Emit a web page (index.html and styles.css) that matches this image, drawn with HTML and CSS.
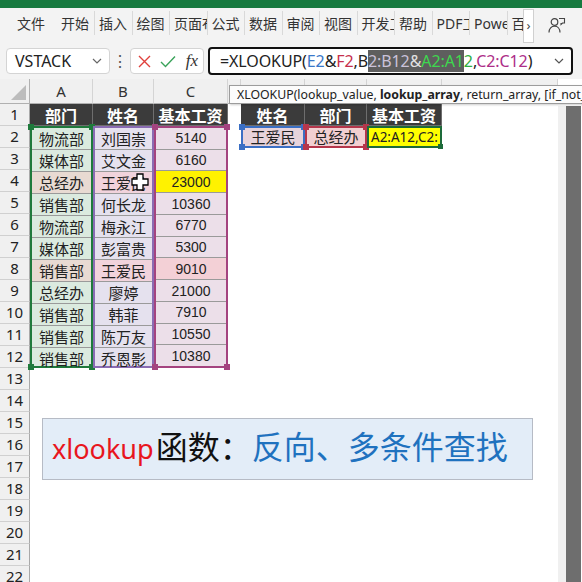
FILE: index.html
```html
<!DOCTYPE html>
<html>
<head>
	<title>XLOOKUP 反向、多条件查找</title>
	<link rel="stylesheet" href="styles.css">
</head>
<body>
	<div class="title-bar"></div>

	<div class="ribbon">
		<div class="tab first">文件</div>
		<div class="tab">开始</div>
		<div class="tab sep">插入</div>
		<div class="tab sep">绘图</div>
		<div class="tab sep">页面布局</div>
		<div class="tab sep">公式</div>
		<div class="tab sep">数据</div>
		<div class="tab sep">审阅</div>
		<div class="tab sep">视图</div>
		<div class="tab sep">开发工具</div>
		<div class="tab sep">帮助</div>
		<div class="tab sep">PDF工具集</div>
		<div class="tab sep">Power Pivot</div>
		<div class="tab sep last">百度网盘</div>
		<div class="more">›</div>
		<div class="share">
			<svg width="18" height="16" viewBox="0 0 18 16">
				<circle cx="6.5" cy="5" r="3.3" fill="none" stroke="#444" stroke-width="1.2"/>
				<path d="M1 15.5c0-4 2.5-6.3 5.5-6.3s5.5 2.3 5.5 6.3" fill="none" stroke="#444" stroke-width="1.2"/>
				<path d="M11 1.5h5.5v4.5h-2l-1.5 1.5v-1.5" fill="none" stroke="#444" stroke-width="1.1"/>
			</svg>
		</div>
	</div>

	<div class="formula-bar">
		<div class="name-box">
			<span>VSTACK</span>
			<svg width="10" height="6" viewBox="0 0 10 6"><path d="M1 1l4 4 4-4" fill="none" stroke="#666" stroke-width="1.2"/></svg>
		</div>
		<div class="dots">⋮</div>
		<div class="fx-box">
			<svg width="13" height="13" viewBox="0 0 13 13"><path d="M1 1l11 11M12 1L1 12" stroke="#e0403c" stroke-width="1.4"/></svg>
			<svg width="16" height="13" viewBox="0 0 16 13"><path d="M1 7l4.5 4.5L15 1.5" fill="none" stroke="#3aa35a" stroke-width="1.4"/></svg>
			<span class="fx">fx</span>
		</div>
		<div class="formula">
			<span class="text">=XLOOKUP(<span class="ref-e">E2</span>&amp;<span class="ref-f">F2</span>,B<span class="sel"><span class="sel-b">2:B12</span>&amp;<span class="sel-a">A2:A1</span></span><span class="ref-a">2</span>,<span class="ref-c">C2:C12</span>)</span>
			<svg width="10" height="6" viewBox="0 0 10 6"><path d="M1 1l4 4 4-4" fill="none" stroke="#555" stroke-width="1.2"/></svg>
		</div>
	</div>

	<div class="main">
		<div class="sheet">
			<!-- column letters (D onwards sit under the tooltip) -->
			<div class="corner"></div>
			<div class="col-head">A</div>
			<div class="col-head">B</div>
			<div class="col-head">C</div>
			<div class="col-head"></div>
			<div class="col-head"></div>
			<div class="col-head"></div>
			<div class="col-head"></div>
			<div class="col-head"></div>

			<div class="row-nums">
				<div class="rn">1</div><div class="rn">2</div><div class="rn">3</div><div class="rn">4</div>
				<div class="rn">5</div><div class="rn">6</div><div class="rn">7</div><div class="rn">8</div>
				<div class="rn">9</div><div class="rn">10</div><div class="rn">11</div><div class="rn">12</div>
				<div class="rn">13</div><div class="rn">14</div><div class="rn">15</div><div class="rn">16</div>
				<div class="rn">17</div><div class="rn">18</div><div class="rn">19</div><div class="rn">20</div>
				<div class="rn">21</div><div class="rn">22</div>
			</div>

			<!-- row 1 -->
			<div class="hd">部门</div>
			<div class="hd">姓名</div>
			<div class="hd">基本工资</div>
			<div class="blank"></div>
			<div class="hd">姓名</div>
			<div class="hd">部门</div>
			<div class="hd">基本工资</div>
			<div class="blank"></div>

			<!-- source ranges A2:C12 -->
			<div class="range range-a">
				<div class="c">物流部</div>
				<div class="c">媒体部</div>
				<div class="c hit">总经办</div>
				<div class="c">销售部</div>
				<div class="c">物流部</div>
				<div class="c">媒体部</div>
				<div class="c hit">销售部</div>
				<div class="c">总经办</div>
				<div class="c">销售部</div>
				<div class="c">销售部</div>
				<div class="c">销售部</div>
				<span class="h tl"></span><span class="h tr"></span><span class="h bl"></span><span class="h br"></span>
			</div>
			<div class="range range-b">
				<div class="c">刘国崇</div>
				<div class="c">艾文金</div>
				<div class="c hit">王爱民</div>
				<div class="c">何长龙</div>
				<div class="c">梅永江</div>
				<div class="c">彭富贵</div>
				<div class="c hit">王爱民</div>
				<div class="c">廖婷</div>
				<div class="c">韩菲</div>
				<div class="c">陈万友</div>
				<div class="c">乔恩影</div>
			</div>
			<div class="range range-c">
				<div class="c num">5140</div>
				<div class="c num">6160</div>
				<div class="c num found">23000</div>
				<div class="c num">10360</div>
				<div class="c num">6770</div>
				<div class="c num">5300</div>
				<div class="c num hit">9010</div>
				<div class="c num">21000</div>
				<div class="c num">7910</div>
				<div class="c num">10550</div>
				<div class="c num">10380</div>
				<span class="h tl"></span><span class="h tr"></span><span class="h bl"></span><span class="h br"></span>
			</div>
			<div class="blank"></div>

			<!-- lookup row -->
			<div class="key key-e">王爱民<span class="h tl"></span><span class="h tr"></span><span class="h bl"></span><span class="h br"></span></div>
			<div class="key key-f">总经办<span class="h tl"></span><span class="h tr"></span><span class="h bl"></span><span class="h br"></span></div>
			<div class="active">A2:A12,C2:<span class="h br"></span></div>

			<div class="tooltip">XLOOKUP(lookup_value, <b>lookup_array</b>, return_array, [if_not_found], [match_mode], [search_mode])</div>

			<div class="banner">
				<span class="latin">xlookup</span><span class="plain">函数：</span><span class="blue">反向、多条件查找</span>
			</div>

			<svg class="cursor" width="18" height="18" viewBox="0 0 18 18">
				<path d="M6 1h6v5h5v6h-5v5H6v-5H1V6h5z" fill="#fff" stroke="#000" stroke-width="1.3"/>
			</svg>
		</div>
		<div class="vscroll"><div class="thumb"></div></div>
	</div>
</body>
</html>
```

FILE: styles.css
```css
* {
    box-sizing: border-box;
}

body {
    margin: 0;
    width: 582px;
    height: 582px;
    overflow: hidden;
    background: #fff;
    color: #222;
    font-family: "Noto Sans", "Noto Sans CJK SC", sans-serif;
}

.title-bar {
    height: 8px;
    background: #177a40;
}

/* ribbon tabs */
.ribbon {
    height: 36px;
    background: #f3f3f3;
    display: flex;
    align-items: flex-start;
    padding: 3px 0 0 12px;
    font-family: "Noto Sans", "Noto Sans CJK SC", sans-serif;
    font-size: 14px;
    color: #333;
}

.tab {
    width: 38px;
    height: 24px;
    line-height: 26px;
    padding-left: 5px;
    white-space: nowrap;
    overflow: hidden;
    flex-shrink: 0;
}

.tab.first {
    margin-right: 6px;
}

.tab.sep {
    width: 37.5px;
    padding-left: 4px;
    border-left: 1px solid #d9d9d9;
}

.tab.last {
    width: 16.5px;
}

.more {
    width: 11px;
    height: 34px;
    margin-top: -2px;
    background: #fff;
    border: 1px solid #d0d0d0;
    font-size: 13px;
    line-height: 30px;
    text-align: center;
    color: #444;
    flex-shrink: 0;
}

.share {
    margin: 6px 0 0 14px;
}

/* formula bar */
.formula-bar {
    height: 35px;
    background: #f3f3f3;
    display: flex;
    align-items: flex-start;
    padding: 3px 0 0 6px;
}

.name-box {
    width: 104px;
    height: 26px;
    margin-top: 1px;
    background: #fff;
    border: 1px solid #d4d4d4;
    border-radius: 4px;
    display: flex;
    align-items: center;
    justify-content: space-between;
    padding: 0 7px 0 8px;
    font-size: 16px;
}

.dots {
    width: 20px;
    text-align: center;
    font-size: 16px;
    line-height: 28px;
    color: #555;
}

.fx-box {
    width: 74px;
    height: 26px;
    margin-top: 1px;
    background: #fff;
    border: 1px solid #d4d4d4;
    border-radius: 4px;
    display: flex;
    align-items: center;
    justify-content: space-between;
    padding: 0 5px 0 7px;
}

.fx {
    font-family: "Liberation Serif", serif;
    font-style: italic;
    font-size: 17px;
    color: #333;
}

.formula {
    width: 365px;
    height: 28px;
    margin-left: 4px;
    background: #fff;
    border: 2px solid #111;
    border-radius: 4px;
    display: flex;
    align-items: center;
    justify-content: space-between;
    padding: 0 7px 0 10px;
    font-size: 16px;
    letter-spacing: -0.1px;
    white-space: nowrap;
}

.ref-e { color: #3a78c9; }
.ref-f { color: #c62f4d; }
.ref-a { color: #2fae40; }
.ref-c { color: #ad2e88; }

.sel {
    background: #5e5e5e;
    color: #e2e2e2;
}

.sel-b { color: #cbc3da; }
.sel-a { color: #3ed84f; }

/* sheet */
.main {
    display: flex;
    height: 503px;
}

.sheet {
    position: relative;
    width: 558px;
    display: grid;
    grid-template-columns: 30px 63px 61px 74px 13px 64px 62px 75px 116px;
    grid-template-rows: 25px repeat(22, 22px);
    font-family: "Noto Sans CJK SC", sans-serif;
    font-size: 15px;
}

.corner {
    position: relative;
    background: #f0f0f0;
    border-right: 1px solid #b0b0b0;
    border-bottom: 1px solid #b0b0b0;
}

.corner::after {
    content: "";
    position: absolute;
    right: 3px;
    bottom: 3px;
    border-left: 15px solid transparent;
    border-bottom: 15px solid #bcbcbc;
}

.col-head {
    background: #f0f0f0;
    border-right: 1px solid #d4d4d4;
    border-bottom: 1px solid #b0b0b0;
    font-family: "Noto Sans", sans-serif;
    font-size: 15px;
    color: #333;
    text-align: center;
    line-height: 24px;
}

.row-nums {
    grid-column: 1;
    grid-row: 2 / span 22;
    display: flex;
    flex-direction: column;
}

.rn {
    height: 22px;
    flex-shrink: 0;
    background: #f0f0f0;
    border-right: 1px solid #a9a9a9;
    border-bottom: 1px solid #d0d0d0;
    font-family: "Noto Sans", sans-serif;
    font-size: 15px;
    line-height: 21px;
    text-align: center;
    color: #222;
}

.hd {
    background: #3b3b3b;
    color: #fff;
    font-weight: bold;
    font-size: 16px;
    text-align: center;
    line-height: 22px;
    border-right: 1px solid #6e6e6e;
    border-bottom: 1px solid #6e6e6e;
}

.range {
    grid-row: 3 / span 11;
    position: relative;
    display: flex;
    flex-direction: column;
    border: 2px solid var(--c);
}

.range-a {
    --c: #1f7a3c;
    background: #dbeadf;
}

.range-b {
    --c: #8a6cb3;
    background: #e5e1ee;
}

.range-c {
    --c: #a4437f;
    background: #ecdfe9;
}

.c {
    flex: 1;
    display: flex;
    align-items: center;
    justify-content: center;
    border-bottom: 1px solid #9a9a9a;
}

.range .c:nth-child(11) {
    border-bottom: none;
}

.range-a .hit { background: #e8dad2; }
.range-b .hit { background: #f1d3dc; }
.range-c .hit { background: #f3d0d6; }
.range-c .found { background: #fff200; }

.num {
    font-family: "Liberation Sans", sans-serif;
    font-size: 14px;
}

.h {
    position: absolute;
    width: 6px;
    height: 6px;
    background: var(--c);
}

.tl { left: -4px; top: -4px; }
.tr { right: -4px; top: -4px; }
.bl { left: -4px; bottom: -4px; }
.br { right: -4px; bottom: -4px; }

.key {
    position: relative;
    border: 2px solid var(--c);
    text-align: center;
    line-height: 18px;
}

.key-e {
    --c: #3b6fc4;
    background: #e7d3db;
}

.key-f {
    --c: #b5364b;
    background: #f1cfd1;
}

.active {
    --c: #1d6b3a;
    position: relative;
    border: 2px solid var(--c);
    background: #ffff00;
    font-family: "Noto Sans", sans-serif;
    font-size: 13.5px;
    line-height: 18px;
    padding-left: 2px;
    white-space: nowrap;
}

.active .h {
    width: 5px;
    height: 5px;
    right: -3px;
    bottom: -3px;
}

/* overlays */
.tooltip {
    position: absolute;
    z-index: 2;
    left: 229px;
    top: 6px;
    width: 360px;
    height: 19px;
    background: #fcfcfc;
    border: 1px solid #9c9c9c;
    box-shadow: 1px 1px 2px rgba(0, 0, 0, 0.2);
    font-family: "Noto Sans", sans-serif;
    font-size: 12.3px;
    line-height: 17px;
    padding-left: 7px;
    white-space: nowrap;
    overflow: hidden;
    color: #222;
}

.banner {
    position: absolute;
    left: 42px;
    top: 339px;
    width: 491px;
    height: 62px;
    background: #e3edf8;
    border: 1px solid #b6bbc5;
    display: flex;
    align-items: baseline;
    padding: 10px 0 0 9px;
    font-family: "Noto Sans CJK SC", sans-serif;
    font-size: 32px;
    line-height: 32px;
    white-space: nowrap;
}

.latin {
    font-family: "Noto Sans", sans-serif;
    font-size: 27px;
    color: #e8161e;
    margin-right: 2px;
}

.plain {
    color: #111;
}

.blue {
    color: #1f72bf;
}

.cursor {
    position: absolute;
    left: 131px;
    top: 94px;
}

.vscroll {
    width: 24px;
    display: flex;
    padding-top: 27px;
    padding-right: 1px;
}

.vscroll::before {
    content: "";
    width: 8px;
    background: #f0f0f0;
}

.thumb {
    flex: 1;
    background: #6e6e6e;
}
```
